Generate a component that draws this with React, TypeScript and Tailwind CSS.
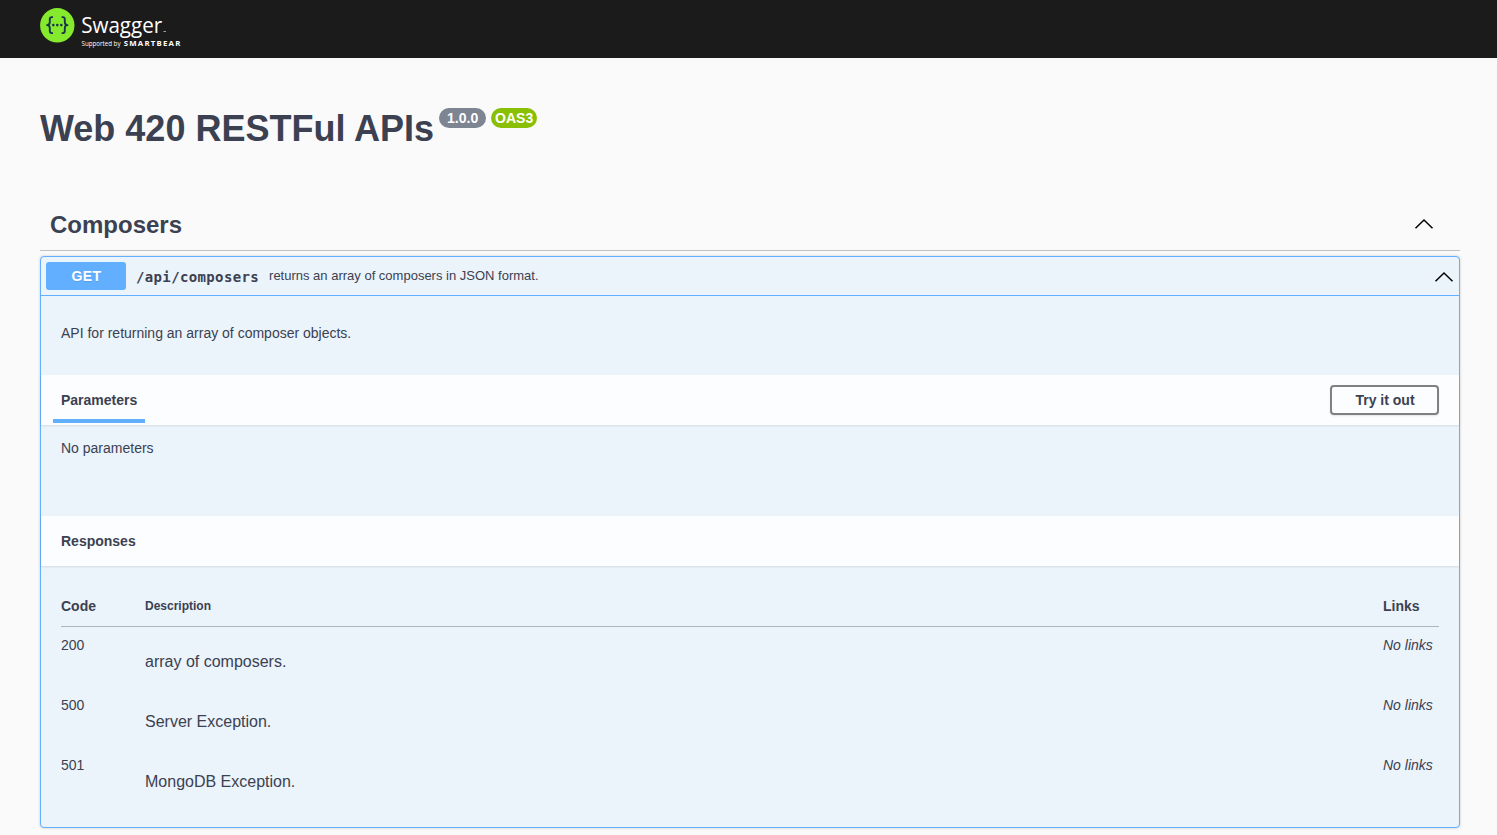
const responses = [
  { code: "200", description: "array of composers." },
  { code: "500", description: "Server Exception." },
  { code: "501", description: "MongoDB Exception." },
];

function Logo() {
  return (
    <svg width="150" height="58" viewBox="0 0 150 58" role="img" aria-label="Swagger">
      <circle cx="17.3" cy="25.3" r="17.2" fill="#85ea2d" />
      <g fill="none" stroke="#173647" strokeWidth="1.9" strokeLinejoin="round">
        <path d="M13 17.1h-1.2q-2 0-2 2v3.2q0 2.6-2.7 2.8q2.7.2 2.7 2.8v3.2q0 2 2 2h1.2" />
        <path d="M21.6 17.1h1.2q2 0 2 2v3.2q0 2.6 2.7 2.8q-2.7.2-2.7 2.8v3.2q0 2-2 2h-1.2" />
      </g>
      <g fill="#173647">
        <circle cx="13.3" cy="25.1" r="1.3" />
        <circle cx="17.3" cy="25.1" r="1.3" />
        <circle cx="21.3" cy="25.1" r="1.3" />
      </g>
      <g fill="#fff">
        <text x="41.2" y="32.6" textLength="81" lengthAdjust="spacingAndGlyphs" className="font-['Open_Sans',sans-serif] text-[22.5px]">Swagger</text>
        <rect x="123.5" y="31" width="2.5" height="1" opacity=".6" />
        <text x="41.5" y="46.3" textLength="39" lengthAdjust="spacingAndGlyphs" className="font-['Open_Sans',sans-serif] text-[6.2px]">Supported by</text>
        <text x="83.8" y="46.2" textLength="56.5" className="font-['Open_Sans',sans-serif] text-[7.8px] font-bold">SMARTBEAR</text>
      </g>
    </svg>
  );
}

function Chevron() {
  return (
    <svg width="20" height="20" viewBox="0 0 20 20" fill="none" stroke="#000" strokeWidth="1.5">
      <path d="M1.5 14.3 10 6l8.5 8.3" />
    </svg>
  );
}

export default function App() {
  return (
    <div className="h-[835px] overflow-hidden bg-[#fafafa] font-['Liberation_Sans',Arial,sans-serif] text-sm text-[#3b4151]">
      <header className="flex h-[58px] bg-[#1b1b1b] pl-10">
        <Logo />
      </header>
      <main className="mr-[37px] ml-10">
        <div className="flex h-[142px] items-start pt-[50px]">
          <h1 className="pt-px text-4xl leading-10 font-bold">Web 420 RESTFul APIs</h1>
          <span className="ml-[5px] h-5 w-[47px] rounded-full bg-[#7d8492] text-center text-[14px] leading-[21px] font-bold text-white">1.0.0</span>
          <span className="ml-[5px] h-5 w-[46px] rounded-full bg-[#89bf04] text-center text-[14px] leading-[21px] font-bold text-white">OAS3</span>
        </div>
        <div className="flex h-[51px] items-center justify-between border-b border-[#3b4151]/30 pr-[26px] pl-2.5">
          <h2 className="text-2xl font-bold">Composers</h2>
          <div className="pb-[3px]">
            <Chevron />
          </div>
        </div>

        <section className="mt-[5px] h-[572px] rounded-[4px] border border-[#61affe] bg-[#ebf3fb] shadow-[0_0_3px_rgba(0,0,0,0.19)]">
          <div className="flex h-[39px] items-center border-b border-[#61affe] pr-[5px] pl-[5px]">
            <span className="h-7 w-20 rounded-[3px] bg-[#61affe] pl-px text-center text-sm leading-7 font-bold tracking-[0.4px] text-white [text-shadow:0_1px_0_rgba(0,0,0,0.1)]">GET</span>
            <span className="ml-2.5 pt-px font-['DejaVu_Sans_Mono',monospace] text-[14px] font-bold tracking-[0.36px]">/api/composers</span>
            <span className="ml-2.5 flex-1 text-[13px]">returns an array of composers in JSON format.</span>
            <div className="pt-px">
              <Chevron />
            </div>
          </div>
          <p className="h-[79px] pt-[27px] pl-5 leading-5">API for returning an array of composer objects.</p>

          <div className="flex h-[50px] items-center justify-between bg-[#fcfdfe] pr-5 pl-3 shadow-[0_1px_2px_rgba(0,0,0,0.1)]">
            <h3 className="h-[46px] w-[92px] border-b-4 border-[#61affe] pl-2 leading-[46px] font-bold">Parameters</h3>
            <button className="h-[30px] w-[109px] rounded-[4px] border-2 border-[#808080] pl-px font-bold shadow-[0_1px_2px_rgba(0,0,0,0.1)]">Try it out</button>
          </div>
          <p className="h-[91px] pt-[13px] pl-5 leading-5">No parameters</p>

          <div className="h-[50px] bg-[#fcfdfe] pl-5 shadow-[0_1px_2px_rgba(0,0,0,0.1)]">
            <h3 className="leading-[50px] font-bold">Responses</h3>
          </div>
          <div className="px-5 pt-5">
            <div className="grid h-[41px] grid-cols-[84px_1fr_56px] items-center border-b border-[#3b4151]/35 font-bold">
              <span>Code</span>
              <span className="text-xs">Description</span>
              <span>Links</span>
            </div>
            {responses.map((r) => (
              <div key={r.code} className="grid h-[60px] grid-cols-[84px_1fr_56px] pt-2 leading-5">
                <span>{r.code}</span>
                <span className="pt-[17px] text-base leading-5">{r.description}</span>
                <i>No links</i>
              </div>
            ))}
          </div>
        </section>
      </main>
    </div>
  );
}
